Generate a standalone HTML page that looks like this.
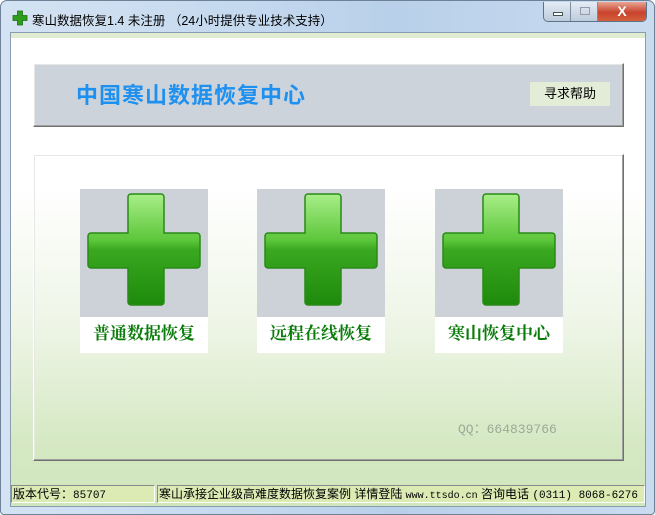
<!DOCTYPE html>
<html><head><meta charset="utf-8"><style>
*{margin:0;padding:0;box-sizing:border-box}
body{width:655px;height:515px;overflow:hidden;background:#fff;font-family:"Liberation Sans","Noto Sans CJK SC",sans-serif;position:relative}
.win{position:absolute;left:0;top:0;width:655px;height:515px;border-radius:7px 7px 4px 4px;background:linear-gradient(90deg,#d4e3f3 0%,#c3d8ee 40%,#b9d0ea 60%,#c9dbef 100%);border:1px solid #6e8196}
.title{position:absolute;left:31px;top:9px;font-size:12.5px;color:#000}
.client{position:absolute;left:9px;top:31px;width:636px;height:475px;border:1px solid #8a9cb0;background:linear-gradient(180deg,#fff 0%,#fff 33%,#eef5e6 62%,#d4e8c2 88%,#d0e6bc 100%)}
.strip{position:absolute;left:0;top:0;width:100%;height:5px;background:#e0ecd2}
.panel{position:absolute;border:1px solid #fff;border-right-color:#707070;border-bottom-color:#707070;box-shadow:inset -1px -1px 0 #a0a0a0,inset 1px 1px 0 #e6e6e6}
.tile{position:absolute;width:128px}
.tile .img{height:128px;background:#cdd2d8;position:relative}
.tile .lbl{height:36px;background:#fff;color:#0a7c0a;font-weight:bold;font-size:17px;text-align:center;line-height:34px;font-family:"Liberation Sans","Noto Serif CJK SC",serif}
.btns{position:absolute;left:542px;top:1px;width:104px;height:20px;border:1px solid #5f7288;border-top:none;border-radius:0 0 5px 5px;overflow:hidden;display:flex}
.btns div{height:100%}
.status{position:absolute;top:452px;height:18px;background:#dcebb4;border:1px solid #8a8a8a;border-right-color:#fff;border-bottom-color:#fff;font-size:12px;line-height:16px;padding-left:1px;white-space:nowrap;overflow:hidden}
</style></head><body>
<div class="win">
 <svg style="position:absolute;left:11px;top:9px" width="16" height="16" viewBox="0 0 16 16"><path d="M5.5 1h5v4.5H15v5h-4.5V15h-5v-4.5H1v-5h4.5z" fill="#2d9e1c" stroke="#1d6d10" stroke-width=".8"/></svg>
 <div class="title">寒山数据恢复1.4 未注册 （24小时提供专业技术支持）</div>
 <div class="btns">
  <div style="width:27px;background:linear-gradient(#e4ecf5,#bccbdb);border-right:1px solid #7c8da1;position:relative"><span style="position:absolute;left:9px;top:10px;width:10px;height:4px;background:#fff;border:1px solid #455"></span></div>
  <div style="width:27px;background:linear-gradient(#e4ecf5,#bccbdb);border-right:1px solid #7c8da1;position:relative"><span style="position:absolute;left:9px;top:5px;width:10px;height:8px;border:1px solid #99a"></span></div>
  <div style="flex:1;background:linear-gradient(#e8a593,#c8432c 55%,#d4603c);color:#fff;font-weight:bold;font-size:14px;text-align:center;line-height:18px">X</div>
 </div>
 <div class="client">
  <div class="strip"></div>
  <div class="panel" style="left:22px;top:30px;width:591px;height:64px;background:#cdd3da">
   <div style="position:absolute;left:42px;top:14px;font-size:22px;color:#1e90f0;letter-spacing:1px;font-weight:bold;font-family:'Liberation Sans','Noto Sans CJK SC',sans-serif">中国寒山数据恢复中心</div>
   <div style="position:absolute;left:496px;top:18px;width:80px;height:24px;background:#e3ecd6;font-size:13px;text-align:center;line-height:24px">寻求帮助</div>
  </div>
  <div class="panel" style="left:22px;top:121px;width:591px;height:307px">
   <div style="position:absolute;left:424px;top:263px;font-family:'Liberation Mono',monospace;font-size:13px;color:#9aaa95">QQ：664839766</div>
  </div>
  <div class="tile" style="left:69px;top:156px"><div class="img"><svg width="128" height="128" viewBox="0 0 128 128"><defs><linearGradient id="g" x1="0" y1="0" x2="0" y2="1"><stop offset="0" stop-color="#a8ee88"/><stop offset=".42" stop-color="#5cc63a"/><stop offset=".5" stop-color="#3aa820"/><stop offset="1" stop-color="#1e8a0c"/></linearGradient></defs><path d="M51 5h30a3 3 0 0 1 3 3v36h33a3 3 0 0 1 3 3v29a3 3 0 0 1-3 3H84v34a3 3 0 0 1-3 3H51a3 3 0 0 1-3-3V79H11a3 3 0 0 1-3-3V47a3 3 0 0 1 3-3h37V8a3 3 0 0 1 3-3z" fill="url(#g)" stroke="#2a8a18" stroke-width="1.5"/></svg></div><div class="lbl">普通数据恢复</div></div>
  <div class="tile" style="left:246px;top:156px"><div class="img"><svg width="128" height="128" viewBox="0 0 128 128"><path d="M51 5h30a3 3 0 0 1 3 3v36h33a3 3 0 0 1 3 3v29a3 3 0 0 1-3 3H84v34a3 3 0 0 1-3 3H51a3 3 0 0 1-3-3V79H11a3 3 0 0 1-3-3V47a3 3 0 0 1 3-3h37V8a3 3 0 0 1 3-3z" fill="url(#g)" stroke="#2a8a18" stroke-width="1.5"/></svg></div><div class="lbl">远程在线恢复</div></div>
  <div class="tile" style="left:424px;top:156px"><div class="img"><svg width="128" height="128" viewBox="0 0 128 128"><path d="M51 5h30a3 3 0 0 1 3 3v36h33a3 3 0 0 1 3 3v29a3 3 0 0 1-3 3H84v34a3 3 0 0 1-3 3H51a3 3 0 0 1-3-3V79H11a3 3 0 0 1-3-3V47a3 3 0 0 1 3-3h37V8a3 3 0 0 1 3-3z" fill="url(#g)" stroke="#2a8a18" stroke-width="1.5"/></svg></div><div class="lbl">寒山恢复中心</div></div>
  <div class="status" style="left:0;width:144px">版本代号：<span style="font-family:'Liberation Mono',monospace;font-size:11px">85707</span></div>
  <div class="status" style="left:146px;width:488px">寒山承接企业级高难度数据恢复案例 详情登陆 <span style="font-family:'Liberation Mono',monospace;font-size:10px">www.ttsdo.cn</span> 咨询电话 <span style="font-family:'Liberation Mono',monospace;font-size:11px">(0311) 8068-6276</span></div>
 </div>
</div>
</body></html>
